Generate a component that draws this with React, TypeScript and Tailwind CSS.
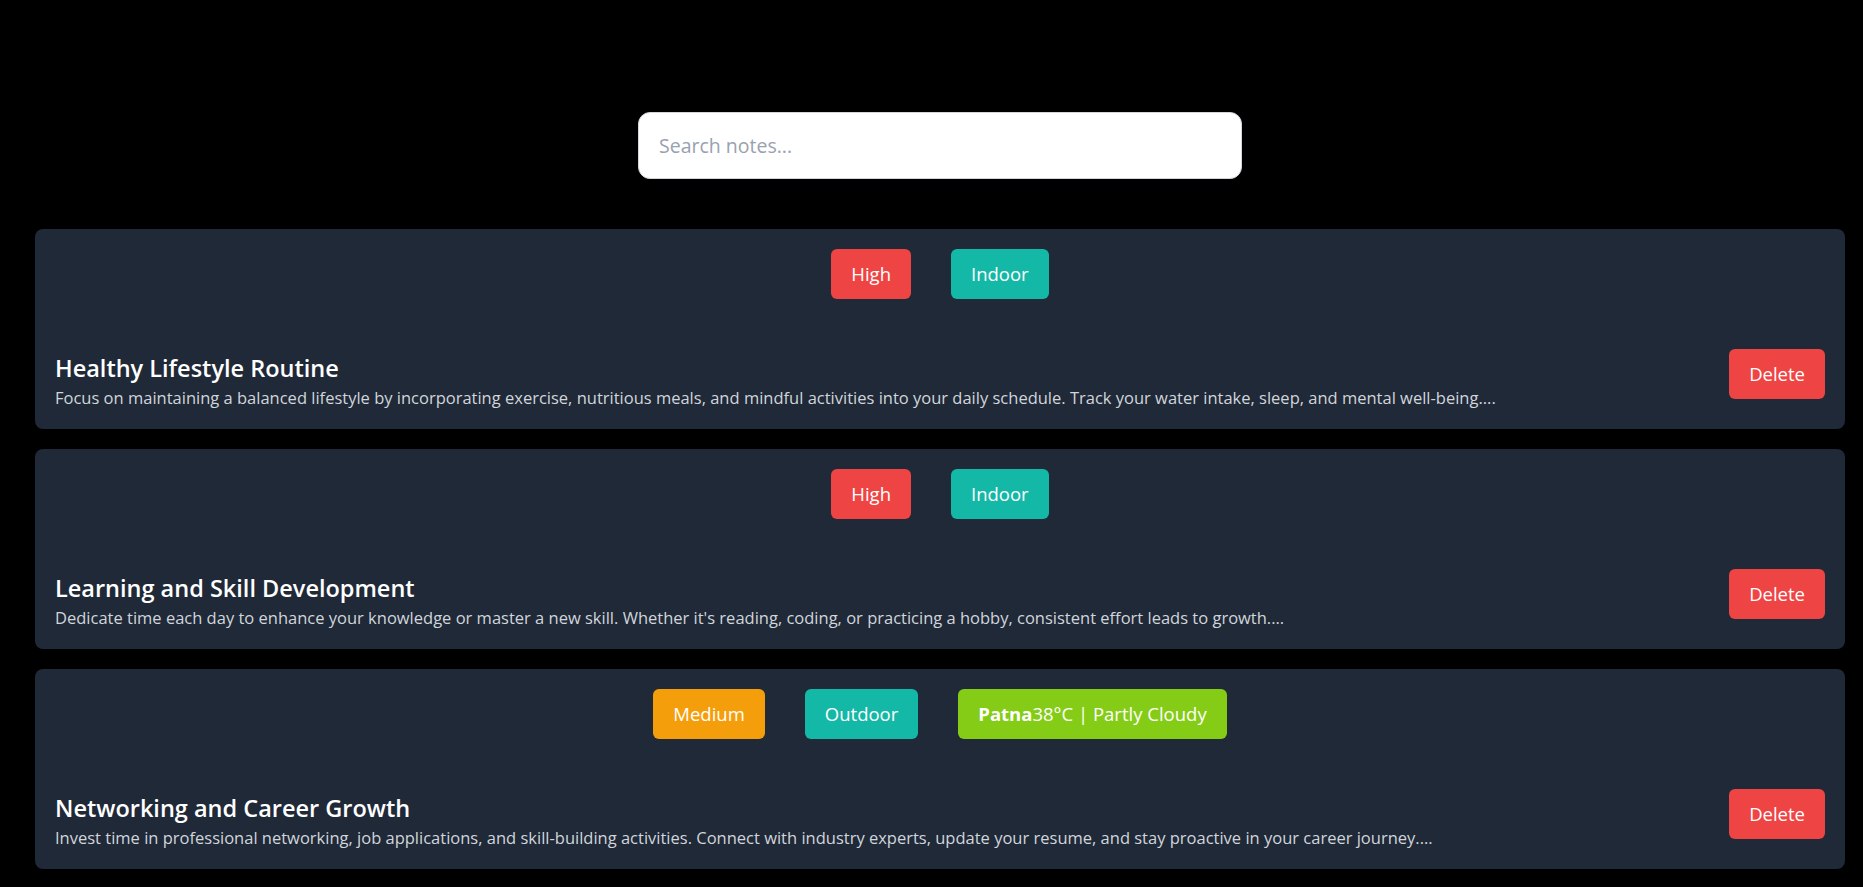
import { Fragment } from "react";

type Tag = { label: string; className: string };

type Note = {
	id: number;
	title: string;
	description: string;
	priority: Tag;
	place: Tag;
	weather?: { city: string; info: string };
};

const notes: Note[] = [
	{
		id: 1,
		title: "Healthy Lifestyle Routine",
		description:
			"Focus on maintaining a balanced lifestyle by incorporating exercise, nutritious meals, and mindful activities into your daily schedule. Track your water intake, sleep, and mental well-being....",
		priority: { label: "High", className: "bg-[#ef4444]" },
		place: { label: "Indoor", className: "bg-[#14b8a6]" },
	},
	{
		id: 2,
		title: "Learning and Skill Development",
		description:
			"Dedicate time each day to enhance your knowledge or master a new skill. Whether it's reading, coding, or practicing a hobby, consistent effort leads to growth....",
		priority: { label: "High", className: "bg-[#ef4444]" },
		place: { label: "Indoor", className: "bg-[#14b8a6]" },
	},
	{
		id: 3,
		title: "Networking and Career Growth",
		description:
			"Invest time in professional networking, job applications, and skill-building activities. Connect with industry experts, update your resume, and stay proactive in your career journey....",
		priority: { label: "Medium", className: "bg-[#f59e0b]" },
		place: { label: "Outdoor", className: "bg-[#14b8a6]" },
		weather: { city: "Patna", info: "38°C | Partly Cloudy" },
	},
];

const badge = "rounded-md px-5 py-[11px] text-[18.5px] leading-7 text-white";

export default function App() {
	return (
		<div
			className="min-h-screen bg-black pt-[112px] pb-5 pl-[35px] pr-[18px]"
			style={{ fontFamily: "'Open Sans', Lato, sans-serif" }}
		>
			{/* Search */}
			<div className="flex justify-center">
				<input
					type="text"
					placeholder="Search notes..."
					className="h-[67px] w-[604px] rounded-xl border border-gray-300 bg-white px-5 text-[19.5px] text-gray-800 placeholder:text-gray-400 outline-none"
				/>
			</div>

			{/* Notes */}
			<div className="mt-[50px] flex flex-col gap-5">
				{notes.map((note) => (
					<div key={note.id} className="h-[200px] rounded-lg bg-[#1f2937] px-5 pt-5">
						<div className="flex justify-center gap-10">
							<span className={`${badge} ${note.priority.className}`}>
								{note.priority.label}
							</span>
							<span className={`${badge} ${note.place.className}`}>
								{note.place.label}
							</span>
							{note.weather && (
								<span className={`${badge} bg-[#84cc16]`}>
									<Fragment>
										<b className="font-bold">{note.weather.city}</b>
										{note.weather.info}
									</Fragment>
								</span>
							)}
						</div>

						<div className="mt-[50px] flex items-start justify-between">
							<div className="mt-[3px]">
								<h3 className="text-[23.5px] font-semibold leading-8 text-white">
									{note.title}
								</h3>
								<p className="text-[16.5px] leading-7 text-gray-300">
									{note.description}
								</p>
							</div>
							<button
								type="button"
								className={`${badge} bg-[#ef4444]`}
							>
								Delete
							</button>
						</div>
					</div>
				))}
			</div>
		</div>
	);
}
